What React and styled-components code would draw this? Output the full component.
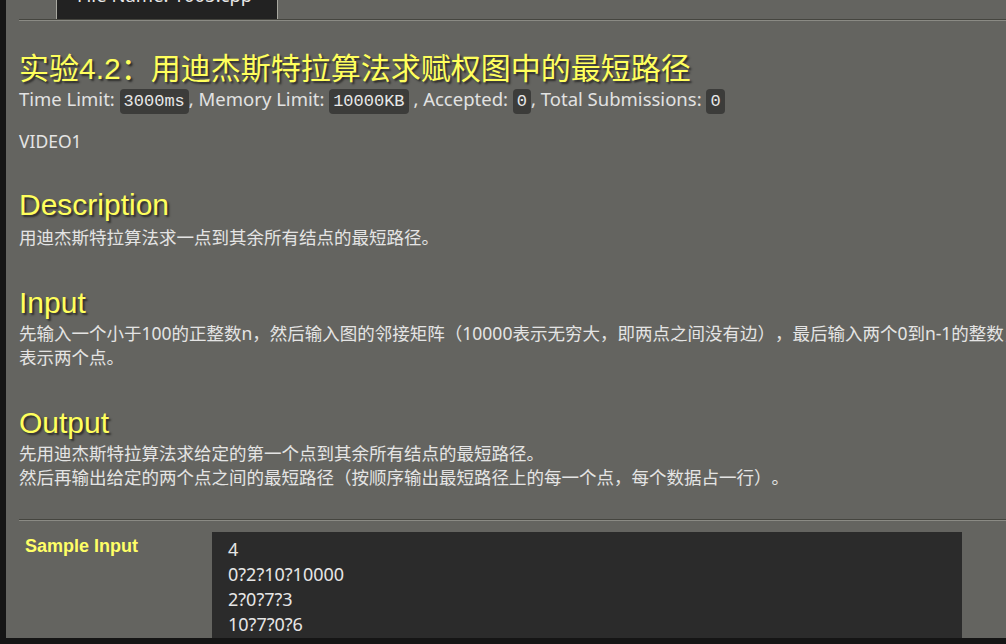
import React from "react";
import styled, { createGlobalStyle } from "styled-components";

const GlobalStyle = createGlobalStyle`
  html, body {
    margin: 0;
    padding: 0;
    background: #151515;
    overflow: hidden;
  }
  body {
    font-family: "Noto Sans", "Noto Sans CJK SC", sans-serif;
    text-spacing-trim: space-all;
  }
`;

const Frame = styled.div`
  width: 1006px;
  height: 644px;
  padding-left: 6px;
  box-sizing: border-box;
  overflow: hidden;
`;

const Screen = styled.div`
  height: 638px;
  background: #646460;
  overflow: hidden;
`;

const Content = styled.div`
  width: 1060px;
  margin-top: -20px;
  padding-left: 13px;
  color: #e4e4e4;
  font-size: 17.5px;
`;

const TabBar = styled.div`
  display: flex;
  padding-left: 37px;
`;

const Tab = styled.div`
  height: 39px;
  box-sizing: border-box;
  padding: 4px 0 0 20px;
  width: 222px;
  background: #222222;
  border-left: 1px solid #a8a8a0;
  border-right: 1px solid #a8a8a0;
  color: #e8e8e8;
  font-size: 18.5px;
  line-height: 22px;
  white-space: nowrap;
`;

const Rule = styled.div`
  height: 0;
  border-top: 1px solid #45453f;
  border-bottom: 1px solid #8a8a84;
  margin-top: ${(p) => p.$top || 0}px;
`;

const Title = styled.h1`
  margin: 31px 0 0 0;
  font-family: "Liberation Sans", "Noto Sans CJK SC", sans-serif;
  font-weight: normal;
  font-size: 30px;
  line-height: 34px;
  color: #ffff5c;
  text-shadow: 2px 2px 2px #2c2c2a;
  white-space: nowrap;
`;

const Info = styled.div`
  margin-top: 2px;
  height: 22px;
  line-height: 22px;
  white-space: nowrap;
  color: #e2e2e2;
  font-size: 18.5px;
`;

const Code = styled.code`
  font-family: "Liberation Mono", "DejaVu Sans Mono", monospace;
  font-size: 17px;
  line-height: 16px;
  background: #3c3c3a;
  color: #e8e8e8;
  border-radius: 4px;
  padding: 3px 4px;
`;

const Para = styled.p`
  margin: ${(p) => p.$top || 0}px 0 0 0;
  line-height: ${(p) => p.$lh || 24.5}px;
  color: #e4e4e4;
  white-space: nowrap;
`;

const Heading = styled.h2`
  margin: ${(p) => p.$top || 36}px 0 0 0;
  font-family: "Liberation Sans", sans-serif;
  font-weight: normal;
  font-size: 30px;
  line-height: 34px;
  color: #ffff5c;
  text-shadow: 2px 2px 2px #2c2c2a;
`;

const SampleRow = styled.div`
  display: grid;
  grid-template-columns: 193px 750px;
  margin-top: 11px;
`;

const SampleLabel = styled.div`
  padding: 3px 0 0 6px;
  font-family: "Liberation Sans", sans-serif;
  font-weight: bold;
  font-size: 18px;
  line-height: 22px;
  color: #ffff66;
`;

const Pre = styled.pre`
  margin: 0;
  padding: 5px 16px 20px 16px;
  background: #2b2b2b;
  color: #e6e6e6;
  font-family: "Noto Sans", sans-serif;
  font-size: 18px;
  line-height: 25.3px;
`;

export default function App() {
  return (
    <>
      <GlobalStyle />
      <Frame>
        <Screen>
          <Content>
            <TabBar>
              <Tab>File Name: 1005.cpp</Tab>
            </TabBar>
            <Rule />
            <Title>实验4.2：用迪杰斯特拉算法求赋权图中的最短路径</Title>
            <Info>
              Time Limit: <Code>3000ms</Code>, Memory Limit: <Code>10000KB</Code> , Accepted:{" "}
              <Code>0</Code>, Total Submissions: <Code>0</Code>
            </Info>
            <Para $top={20} $lh={22}>VIDEO1</Para>
            <Heading>Description</Heading>
            <Para $top={3}>用迪杰斯特拉算法求一点到其余所有结点的最短路径。</Para>
            <Heading>Input</Heading>
            <Para $top={1}>
              先输入一个小于100的正整数n，然后输入图的邻接矩阵（10000表示无穷大，即两点之间没有边），最后输入两个0到n-1的整数，
              <br />
              表示两个点。
            </Para>
            <Heading>Output</Heading>
            <Para $top={1}>
              先用迪杰斯特拉算法求给定的第一个点到其余所有结点的最短路径。
              <br />
              然后再输出给定的两个点之间的最短路径（按顺序输出最短路径上的每一个点，每个数据占一行）。
            </Para>
            <Rule $top={29} />
            <SampleRow>
              <SampleLabel>Sample Input</SampleLabel>
              <Pre>{"4\n0?2?10?10000\n2?0?7?3\n10?7?0?6\n10000?3?6?0\n0 2"}</Pre>
            </SampleRow>
          </Content>
        </Screen>
      </Frame>
    </>
  );
}
